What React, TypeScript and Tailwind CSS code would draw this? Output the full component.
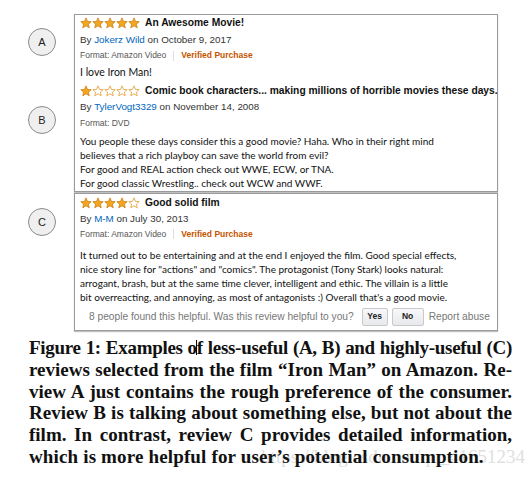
const sans = { fontFamily: '"Liberation Sans", Arial, sans-serif' };
const body = { fontFamily: 'Lato, "Liberation Sans", sans-serif' };
const serif = { fontFamily: '"Liberation Serif", "Times New Roman", serif' };

function Star({ filled }: { filled: boolean }) {
  return (
    <svg width="12" height="12" viewBox="0 0 24 24" className="shrink-0">
      <path
        d="M12 1.8l3 7 7.4.6-5.6 4.9 1.7 7.3L12 17.7l-6.5 3.9 1.7-7.3L1.6 9.4 9 8.8z"
        fill={filled ? "#f3a51f" : "#fff"}
        stroke={filled ? "#c98213" : "#e29b2b"}
        strokeWidth="1.6"
        strokeLinejoin="round"
      />
    </svg>
  );
}

function Stars({ n }: { n: number }) {
  return (
    <div className="flex w-[60px] shrink-0">
      {[0, 1, 2, 3, 4].map((i) => (
        <Star key={i} filled={i < n} />
      ))}
    </div>
  );
}

function Title({ n, text, h }: { n: number; text: string; h: string }) {
  return (
    <div className={`flex items-center ${h}`}>
      <Stars n={n} />
      <span className="ml-[5px] whitespace-nowrap text-[10.25px] font-bold text-[#111]" style={sans}>
        {text}
      </span>
    </div>
  );
}

function By({ name, date, h }: { name: string; date: string; h: string }) {
  return (
    <div className={`flex items-center whitespace-nowrap text-[9.8px] text-[#333] ${h}`} style={sans}>
      By&nbsp;<span className="text-[#0066c0]">{name}</span>&nbsp;on {date}
    </div>
  );
}

function Format({ fmt, verified, h }: { fmt: string; verified?: boolean; h: string }) {
  return (
    <div className={`flex items-center whitespace-nowrap text-[8.5px] text-[#555] ${h}`} style={sans}>
      <span>Format: {fmt}</span>
      {verified && (
        <>
          <span className="mx-[7px] h-[10px] w-px bg-[#ddd]" />
          <span className="font-bold text-[#c45500]">Verified Purchase</span>
        </>
      )}
    </div>
  );
}

function Lines({ lines }: { lines: string[] }) {
  return (
    <div className="text-[10px] leading-[14px] text-[#111]" style={body}>
      {lines.map((l, i) => (
        <div key={i} className="whitespace-nowrap">
          {l}
        </div>
      ))}
    </div>
  );
}

function Circle({ letter, mt }: { letter: string; mt: string }) {
  return (
    <div
      className={`flex h-[28px] w-[28px] items-center justify-center rounded-full border border-[#8a8a8a] bg-[#efefef] text-[11px] text-[#222] ${mt}`}
      style={sans}
    >
      {letter}
    </div>
  );
}

const caption = [
  "Figure 1: Examples of less-useful (A, B) and highly-useful (C)",
  "reviews selected from the film \u201cIron Man\u201d on Amazon. Re-",
  "view A just contains the rough preference of the consumer.",
  "Review B is talking about something else, but not about the",
  "film. In contrast, review C provides detailed information,",
];

export default function App() {
  return (
    <div className="h-[482px] w-[532px] overflow-hidden bg-white">
      <div className="flex pt-[14px]">
        <div className="flex w-[74px] shrink-0 flex-col pl-[28px]">
          <Circle letter="A" mt="mt-[14px]" />
          <Circle letter="B" mt="mt-[50px]" />
          <Circle letter="C" mt="mt-[74px]" />
        </div>
        <div className="flex w-[424px] flex-col">
          <div className="border border-[#9a9a9a] pl-[5px] shadow-[0_1px_1px_rgba(0,0,0,0.25)]">
            <Title n={5} text="An Awesome Movie!" h="h-[16px]" />
            <By name="Jokerz Wild" date="October 9, 2017" h="h-[18px]" />
            <Format fmt="Amazon Video" verified h="h-[13px]" />
            <div className="flex h-[21px] items-center text-[10.5px] text-[#111]" style={body}>
              I love Iron Man!
            </div>
            <Title n={1} text="Comic book characters... making millions of horrible movies these days." h="h-[16px]" />
            <By name="TylerVogt3329" date="November 14, 2008" h="h-[16px]" />
            <Format fmt="DVD" h="h-[16px]" />
            <div className="pb-px pt-[3px]">
              <Lines
                lines={[
                  "You people these days consider this a good movie? Haha. Who in their right mind",
                  "believes that a rich playboy can save the world from evil?",
                  "For good and REAL action check out WWE, ECW, or TNA.",
                  "For good classic Wrestling.. check out WCW and WWF.",
                ]}
              />
            </div>
          </div>
          <div className="mt-px border border-[#9a9a9a] pl-[5px] shadow-[0_1px_1px_rgba(0,0,0,0.25)]">
            <Title n={4} text="Good solid film" h="h-[18px]" />
            <By name="M-M" date="July 30, 2013" h="h-[14px]" />
            <Format fmt="Amazon Video" verified h="h-[16px]" />
            <div className="pt-[6px]">
              <Lines
                lines={[
                  "It turned out to be entertaining and at the end I enjoyed the film. Good special effects,",
                  "nice story line for \"actions\" and \"comics\". The protagonist (Tony Stark) looks natural:",
                  "arrogant, brash, but at the same time clever, intelligent and ethic. The villain is a little",
                  "bit overreacting, and annoying, as most of antagonists :) Overall that's a good movie.",
                ]}
              />
            </div>
            <div className="flex h-[26px] items-center whitespace-nowrap pb-px pl-[9px] text-[10.2px] text-[#777]" style={sans}>
              <span>8 people found this helpful. Was this review helpful to you?</span>
              <span className="ml-[8px] flex h-[18px] w-[26px] items-center justify-center rounded-[2px] border border-[#c9c9c9] bg-gradient-to-b from-[#f7f8fa] to-[#e7e9ec] text-[8.5px] font-bold text-[#222]">
                Yes
              </span>
              <span className="ml-[4px] flex h-[18px] w-[32px] items-center justify-center rounded-[2px] border border-[#c9c9c9] bg-gradient-to-b from-[#f7f8fa] to-[#e7e9ec] text-[8.5px] font-bold text-[#222]">
                No
              </span>
              <span className="ml-[5px]">Report abuse</span>
            </div>
          </div>
        </div>
      </div>
      <div className="relative mt-[6px] pl-[29px] pr-[20px] text-[19px] font-bold leading-[21.8px] text-[#111]" style={serif}>
        {caption.map((l, i) => (
          <div
            key={i}
            className={`whitespace-nowrap text-justify [text-align-last:justify] ${i === 0 ? "tracking-[-0.3px]" : ""}`}
          >
            {i === 0 ? (
              <>
                Figure 1: Examples o
                <span className="relative">
                  <span className="absolute left-[-1px] top-[3px] h-[15px] w-px bg-black" />
                </span>
                f less-useful (A, B) and highly-useful (C)
              </>
            ) : (
              l
            )}
          </div>
        ))}
        <div className="relative whitespace-nowrap">
          <span className="absolute right-[-13px] top-0 font-normal text-[#e0e0e0]">https://blog.csdn.net/qq_41651234</span>
          <span className="relative tracking-[0.15px]">which is more helpful for user&rsquo;s potential consumption.</span>
        </div>
      </div>
    </div>
  );
}
